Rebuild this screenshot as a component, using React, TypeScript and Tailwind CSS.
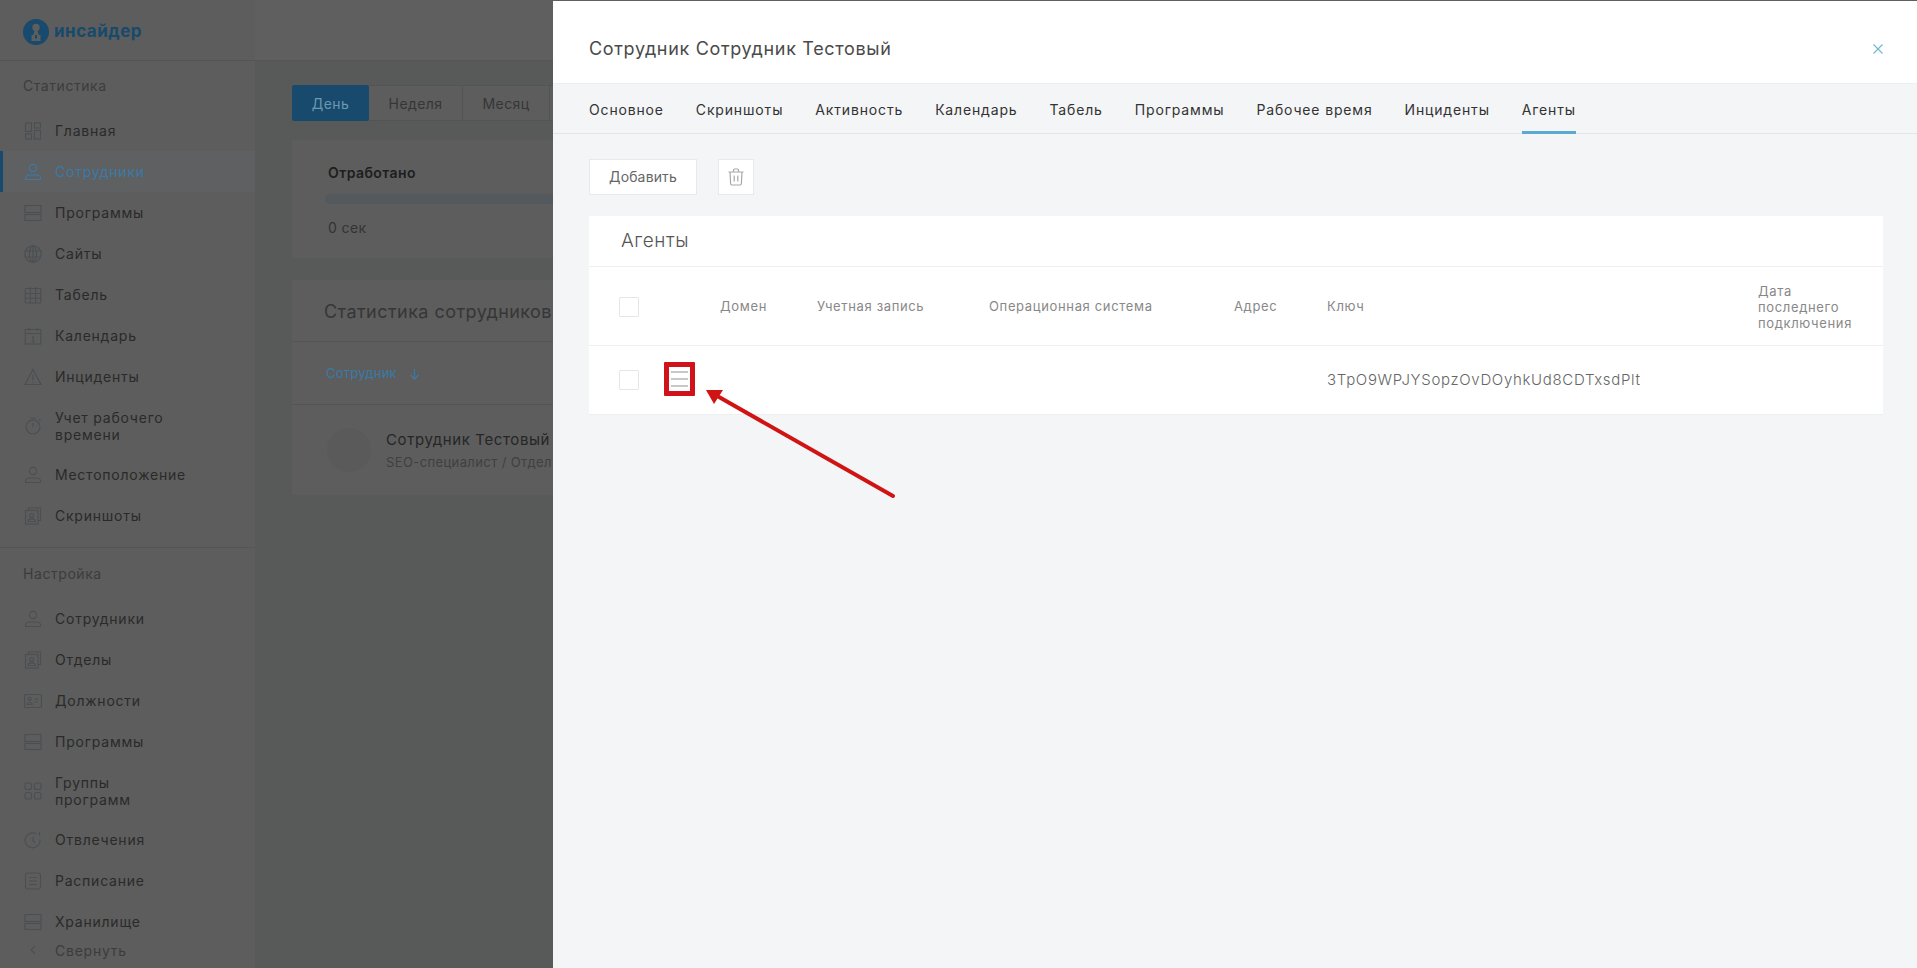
import React from 'react';

type IconName =
  | 'dash' | 'user' | 'rows' | 'globe' | 'table' | 'calendar' | 'warn' | 'timer'
  | 'book' | 'card' | 'apps' | 'clock' | 'doc';

function NavIcon({ name, color = '#4a4f53' }: { name: IconName; color?: string }) {
  return (
    <svg width="18" height="18" viewBox="0 0 18 18" fill="none" stroke={color} strokeWidth="1.1" className="shrink-0">
      {name === 'dash' && (
        <>
          <rect x="1.5" y="1" width="6" height="8.5" />
          <rect x="10.5" y="1" width="6" height="5" />
          <rect x="1.5" y="12" width="6" height="5" />
          <rect x="10.5" y="8.5" width="6" height="8.5" />
        </>
      )}
      {name === 'user' && (
        <>
          <circle cx="9" cy="5" r="3.6" />
          <path d="M1.5 16.5v-1.2c0-2 1.8-3.3 3.6-3.3h7.8c1.8 0 3.6 1.3 3.6 3.3v1.2z" />
        </>
      )}
      {name === 'rows' && (
        <>
          <rect x="1" y="1.5" width="16" height="7" />
          <rect x="1" y="10.5" width="16" height="6" />
        </>
      )}
      {name === 'globe' && (
        <>
          <circle cx="9" cy="9" r="8.2" />
          <ellipse cx="9" cy="9" rx="3.6" ry="8.2" />
          <path d="M1.5 6h15M1.5 12h15M9 1v16" />
        </>
      )}
      {name === 'table' && (
        <>
          <rect x="1.2" y="2.5" width="15.6" height="14.5" rx="1" />
          <path d="M6.3 1v16M11.7 1v16M1.2 7.5h15.6M1.2 12.3h15.6" />
        </>
      )}
      {name === 'calendar' && (
        <>
          <rect x="1.2" y="2.5" width="15.6" height="14.5" />
          <path d="M1.2 6.5h15.6M5 .8v3M13 .8v3M8 10.5l1.2-.8v5M7.5 14.7h3.4" />
        </>
      )}
      {name === 'warn' && <path d="M9 1.5 17 16.5H1zM9 6.5v5.5M9 13.6v1.2" />}
      {name === 'timer' && (
        <>
          <circle cx="9" cy="10" r="7" />
          <path d="M9 10V6M6.5 1.2h5M15 2.5l1.5 1.5" />
        </>
      )}
      {name === 'book' && (
        <>
          <path d="M4.5 3.5V1h12v12.5h-2.5" />
          <rect x="1.5" y="3.5" width="12.5" height="13.5" />
          <circle cx="7.7" cy="8.5" r="2" />
          <path d="M4 14.5c0-2 1.7-2.6 3.7-2.6s3.7.6 3.7 2.6z" />
        </>
      )}
      {name === 'card' && (
        <>
          <rect x=".6" y="2.5" width="16.8" height="13" rx="1" />
          <circle cx="5.6" cy="7" r="1.6" />
          <path d="M3 12.5c0-1.6 1.2-2 2.6-2s2.6.4 2.6 2zM10.5 7h4M10.5 10h3" />
        </>
      )}
      {name === 'apps' && (
        <>
          <rect x="1" y="1" width="6.5" height="6.5" rx="2" />
          <rect x="10.5" y="1" width="6.5" height="6.5" rx="2" />
          <rect x="1" y="10.5" width="6.5" height="6.5" rx="2" />
          <rect x="10.5" y="10.5" width="6.5" height="6.5" rx="2" />
        </>
      )}
      {name === 'clock' && (
        <>
          <path d="M12.5 3a7.5 7.5 0 1 0 3.5 5.5" />
          <path d="M9 6v4l2.5 1.5M15.5 1v3.5" />
        </>
      )}
      {name === 'doc' && (
        <>
          <rect x="1.5" y="1" width="15" height="16" rx="2.5" />
          <path d="M5 5.5h8M5 9h8M5 12.5h8" />
        </>
      )}
    </svg>
  );
}

function NavItem({ icon, label, active, rowClass = 'h-[41px]' }: { icon: IconName; label: React.ReactNode; active?: boolean; rowClass?: string }) {
  if (active) {
    return (
      <div className="flex h-[41px] items-center gap-[13px] border-l-[3px] border-[#174a6c] bg-[#5f6062] pl-[21px] text-[#3a7aa6]">
        <NavIcon name={icon} color="#3a7aa6" />
        <span className="text-[14px] leading-[17px] tracking-[0.055em]">{label}</span>
      </div>
    );
  }
  return (
    <div className={`flex ${rowClass} items-center gap-[13px] pl-[24px] text-[#2a2a2a]`}>
      <NavIcon name={icon} />
      <span className="text-[14px] leading-[17px] tracking-[0.055em]">{label}</span>
    </div>
  );
}

function Logo() {
  return (
    <div className="flex h-[61px] shrink-0 items-center gap-[5px] border-b border-[#555555] pl-[23px] pt-[3px]">
      <svg width="26" height="26" viewBox="0 0 26 26">
        <circle cx="13" cy="13" r="13" fill="#174a6c" />
        <circle cx="13" cy="8.5" r="3.7" fill="#5e5e5e" />
        <path d="M11.5 12h3l1.3 4h1.7v6h-9v-6h1.7z" fill="#5e5e5e" />
        <rect x="12" y="16" width="2" height="3.5" fill="#174a6c" />
      </svg>
      <span className="text-[17px] font-bold leading-none tracking-[0.03em] text-[#174a6c]">инсайдер</span>
    </div>
  );
}

function Sidebar() {
  return (
    <aside className="flex h-[968px] w-[255px] shrink-0 flex-col bg-[#5d5d5d] shadow-[0_0_20px_rgba(0,0,0,0.12)]">
      <Logo />
      <div className="flex-1 overflow-hidden">
        <div className="flex h-[49px] items-center pl-[23px] text-[14px] tracking-[0.04em] text-[#3c3c3c]">Статистика</div>
        <NavItem icon="dash" label="Главная" />
        <NavItem icon="user" label="Сотрудники" active />
        <NavItem icon="rows" label="Программы" />
        <NavItem icon="globe" label="Сайты" />
        <NavItem icon="table" label="Табель" />
        <NavItem icon="calendar" label="Календарь" />
        <NavItem icon="warn" label="Инциденты" />
        <NavItem icon="timer" rowClass="h-[57px]" label={<>Учет рабочего<br />времени</>} />
        <NavItem icon="user" label="Местоположение" />
        <NavItem icon="book" label="Скриншоты" />
        <div className="mt-[11px] border-b border-[#555555]" />
        <div className="flex h-[50px] items-center pl-[23px] text-[14px] tracking-[0.04em] text-[#3c3c3c]">Настройка</div>
        <NavItem icon="user" label="Сотрудники" />
        <NavItem icon="book" label="Отделы" />
        <NavItem icon="card" label="Должности" />
        <NavItem icon="rows" label="Программы" />
        <NavItem icon="apps" rowClass="h-[57px]" label={<>Группы<br />программ</>} />
        <NavItem icon="clock" label="Отвлечения" />
        <NavItem icon="doc" label="Расписание" />
        <NavItem icon="rows" label="Хранилище" />
      </div>
      <div className="flex h-[36px] shrink-0 items-center gap-[13px] pl-[24px] text-[#3c3c3c]">
        <svg width="18" height="18" viewBox="0 0 18 18" fill="none" stroke="#4a4f53" strokeWidth="1.1" className="shrink-0">
          <path d="M11 5 7 9l4 4" />
        </svg>
        <span className="text-[14px] tracking-[0.055em]">Свернуть</span>
      </div>
    </aside>
  );
}

function Background() {
  return (
    <main className="min-w-0 flex-1 bg-[#585a5a]">
      <div className="h-[61px] border-b border-[#555555] bg-[#5f5f5f]" />
      <div className="pl-[37px]">
        <div className="mt-[24px] flex h-[36px] text-[14px] tracking-[0.03em] text-[#363636]">
          <div className="flex w-[77px] items-center justify-center rounded-[2px] bg-[#174a6c] text-[#6c98b2]">День</div>
          <div className="flex w-[94px] items-center justify-center border-y border-r border-[#545454] bg-[#5d5d5d]">Неделя</div>
          <div className="flex w-[87px] items-center justify-center border-y border-r border-[#545454] bg-[#5d5d5d]">Месяц</div>
          <div className="flex-1 border-y border-[#545454] bg-[#5d5d5d]" />
        </div>
        <div className="mt-[19px] h-[118px] overflow-hidden bg-[#5d5d5d] pl-[36px] pt-[24px]">
          <div className="text-[14px] font-semibold leading-[18px] tracking-[0.03em] text-[#1e1e1e]">Отработано</div>
          <div className="-ml-[3px] mt-[12px] h-[10px] rounded-l-full bg-[#53595d]" />
          <div className="mt-[15px] text-[14px] leading-[18px] tracking-[0.03em] text-[#333333]">0 сек</div>
        </div>
        <div className="mt-[22px] h-[215px] overflow-hidden bg-[#5d5d5d]">
          <div className="flex h-[62px] items-center border-b border-[#555555] pl-[32px] pt-[1px] text-[18px] tracking-[0.025em] whitespace-nowrap text-[#363636]">
            Статистика сотрудников
          </div>
          <div className="flex h-[63px] items-center gap-[12px] border-b border-[#555555] pl-[34px] pt-[2px] text-[13px] tracking-[0.02em] text-[#3a7aa6]">
            Сотрудник
            <span className="text-[14px]">↓</span>
          </div>
          <div className="flex items-center gap-[15px] whitespace-nowrap pl-[35px] pt-[23px]">
            <div className="h-[44px] w-[44px] shrink-0 rounded-full bg-[#5a5a5a]" />
            <div>
              <div className="text-[15px] leading-[18px] tracking-[0.04em] text-[#262626]">Сотрудник Тестовый</div>
              <div className="mt-[5px] text-[13px] leading-[16px] tracking-[0.03em] text-[#404040]">SEO-специалист / Отдел</div>
            </div>
          </div>
        </div>
      </div>
    </main>
  );
}

const tabs = ['Основное', 'Скриншоты', 'Активность', 'Календарь', 'Табель', 'Программы', 'Рабочее время', 'Инциденты', 'Агенты'];

function Checkbox() {
  return <div className="h-[20px] w-[20px] rounded-[1px] border border-[#e6e6e6] bg-white" />;
}

function Drawer() {
  return (
    <section className="absolute right-0 top-[1px] flex h-[967px] w-[1364px] flex-col bg-[#f4f5f7]">
      <div className="flex h-[83px] shrink-0 items-center justify-between border-b border-[#eceef1] bg-white pl-[36px] pr-[34px] pt-[13px]">
        <h1 className="text-[18px] tracking-[0.037em] text-[#4a4a4a]">Сотрудник Сотрудник Тестовый</h1>
        <svg width="10" height="10" viewBox="0 0 10 10" stroke="#6fb6d6" strokeWidth="1.1" fill="none">
          <path d="M.5.5l9 9M9.5.5l-9 9" />
        </svg>
      </div>
      <div className="flex h-[50px] shrink-0 gap-[32px] border-b border-[#e3e5e8] pl-[36px] text-[14px] tracking-[0.06em] text-[#333333]">
        {tabs.map((tab) => (
          <div
            key={tab}
            className={
              tab === 'Агенты'
                ? 'flex h-[50px] items-center border-y-[3px] border-t-transparent border-b-[#5aaad2]'
                : 'flex h-[50px] items-center'
            }
          >
            {tab}
          </div>
        ))}
      </div>
      <div className="pl-[36px] pr-[34px] pt-[25px]">
        <div className="flex gap-[21px]">
          <button className="h-[36px] w-[108px] border border-[#e8e9eb] bg-white pb-[2px] text-[14px] tracking-[0.01em] text-[#666666]">Добавить</button>
          <button className="flex h-[36px] w-[36px] items-center justify-center border border-[#e8e9eb] bg-white">
            <svg width="18" height="18" viewBox="0 0 18 18" fill="none" stroke="#a8a8a8" strokeWidth="1.2">
              <path d="M1.5 4h15M6.5 4V2c0-.6.4-1 1-1h3c.6 0 1 .4 1 1v2M3 4l.6 11.5c0 .9.7 1.5 1.5 1.5h7.8c.8 0 1.5-.6 1.5-1.5L15 4M7.2 7.5v6M10.8 7.5v6" />
            </svg>
          </button>
        </div>
        <div className="mt-[21px] bg-white">
          <div className="flex h-[51px] items-center border-b border-[#eeeeee] pl-[32px] pt-[1px] text-[19px] font-light tracking-[0.03em] text-[#555555]">Агенты</div>
          <div className="grid h-[79px] grid-cols-[75px_56px_97px_172px_245px_93px_431px_125px] items-center border-b border-[#eeeeee] pt-[1px] text-[13px] tracking-[0.05em] text-[#888888]">
            <div className="pl-[30px]"><Checkbox /></div>
            <div />
            <div>Домен</div>
            <div>Учетная запись</div>
            <div>Операционная система</div>
            <div>Адрес</div>
            <div>Ключ</div>
            <div className="leading-[16px]">Дата<br />последнего<br />подключения</div>
          </div>
          <div className="grid h-[69px] grid-cols-[75px_56px_97px_172px_245px_93px_431px_125px] items-center border-b border-[#eeeeee] text-[#666666]">
            <div className="pl-[30px]"><Checkbox /></div>
            <div>
              <div className="-mt-[3px] flex h-[34px] w-[31px] flex-col justify-center gap-[5px] rounded-[1px] border-[5px] border-[#d0121b] bg-white px-[2px]">
                <div className="h-[2px] bg-[#c8c8c8]" />
                <div className="h-[2px] bg-[#c8c8c8]" />
                <div className="h-[2px] bg-[#c8c8c8]" />
              </div>
            </div>
            <div />
            <div />
            <div />
            <div />
            <div className="text-[15px] font-light tracking-[0.045em] whitespace-nowrap">3TpO9WPJYSopzOvDOyhkUd8CDTxsdPlt</div>
            <div />
          </div>
        </div>
      </div>
      <svg className="absolute left-[150px] top-[384px]" width="200" height="115" viewBox="0 0 200 115" fill="none">
        <path d="M190 111 16 12" stroke="#d01414" strokeWidth="4" strokeLinecap="round" />
        <path d="M3 5h17l-9 14z" fill="#d01414" />
      </svg>
    </section>
  );
}

export default function App() {
  return (
    <div className="relative flex h-[968px] w-[1917px] overflow-hidden bg-[#585a5a] font-['Inter','Liberation_Sans',sans-serif]">
      <Sidebar />
      <Background />
      <Drawer />
    </div>
  );
}
